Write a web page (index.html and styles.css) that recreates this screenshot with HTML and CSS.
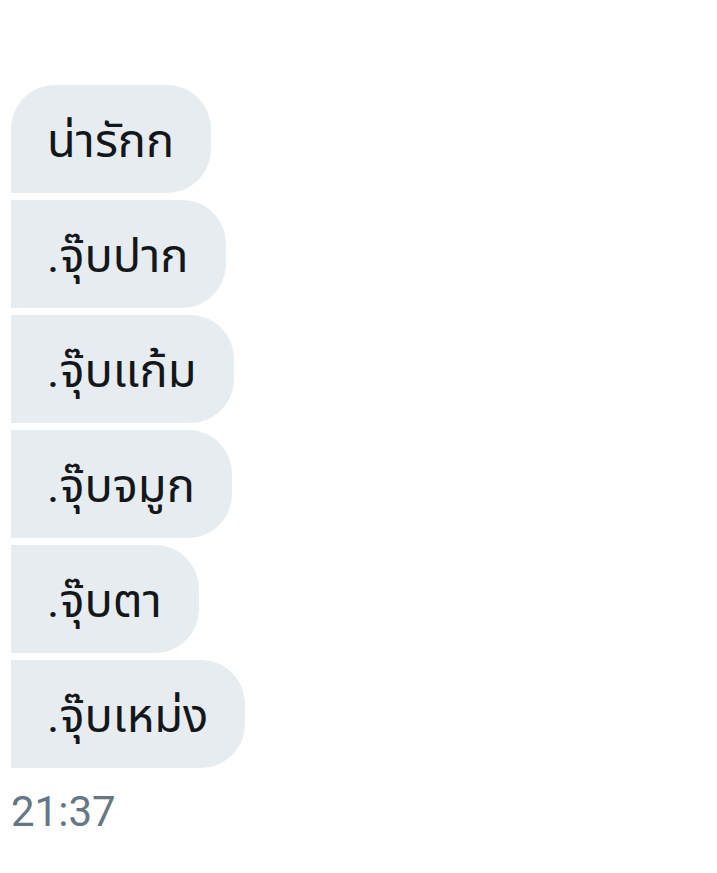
FILE: index.html
```html
<!DOCTYPE html>
<html lang="th">
<head>
<meta charset="utf-8">
<link rel="stylesheet" href="styles.css">
</head>
<body>
<div class="thread">
  <div class="group">
    <div class="bubble first">น่ารักก</div>
    <div class="bubble">.จุ๊บปาก</div>
    <div class="bubble">.จุ๊บแก้ม</div>
    <div class="bubble">.จุ๊บจมูก</div>
    <div class="bubble">.จุ๊บตา</div>
    <div class="bubble">.จุ๊บเหม่ง</div>
  </div>
  <div class="time">21:37</div>
</div>
</body>
</html>
```
FILE: styles.css
```css
html, body {
  margin: 0;
  padding: 0;
  background: #ffffff;
}
body {
  font-family: Roboto, "Noto Sans", "Noto Sans Thai", sans-serif;
}
.thread {
  padding: 85px 0 0 11px;
}
.group {
  display: flex;
  flex-direction: column;
  align-items: flex-start;
  gap: 7px;
}
.bubble {
  box-sizing: border-box;
  background: #e6ecf0;
  color: #14171a;
  font-size: 47px;
  line-height: 104px;
  height: 108px;
  padding: 4px 37px 0 36px;
  border-radius: 0 44px 44px 0;
  white-space: nowrap;
}
.bubble.first {
  border-radius: 44px 44px 44px 0;
}
.time {
  margin-top: 19px;
  font-size: 42px;
  color: #657786;
  line-height: 50px;
}
```
